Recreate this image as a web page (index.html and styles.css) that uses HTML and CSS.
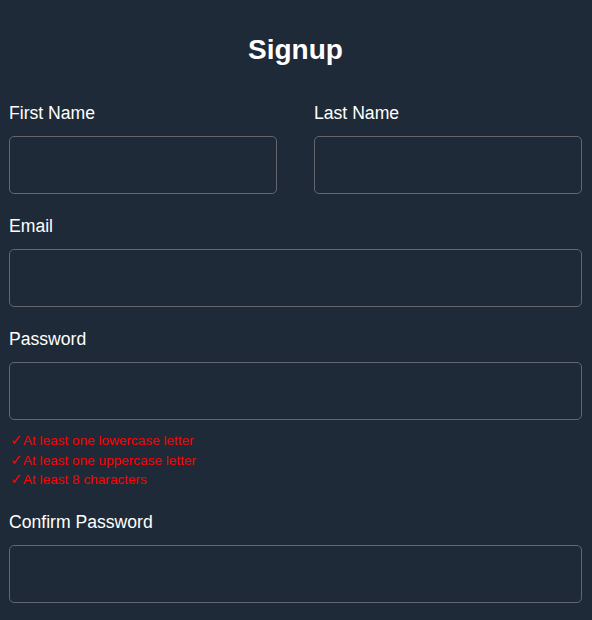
FILE: index.html
```html
<!DOCTYPE html>
<html lang="en">
<head>
  <meta charset="UTF-8">
  <title>Signup</title>
  <link rel="stylesheet" href="styles.css">
</head>
<body>

  <form class="signup">
    <h2>Signup</h2>

    <div class="row">
      <div class="field">
        <label for="firstName">First Name</label>
        <input type="text" id="firstName">
      </div>
      <div class="field">
        <label for="lastName">Last Name</label>
        <input type="text" id="lastName">
      </div>
    </div>

    <div class="field">
      <label for="email">Email</label>
      <input type="email" id="email">
    </div>

    <div class="field">
      <label for="password">Password</label>
      <input type="password" id="password">
      <ul class="rules">
        <li><span class="tick">✓</span>At least one lowercase letter</li>
        <li><span class="tick">✓</span>At least one uppercase letter</li>
        <li><span class="tick">✓</span>At least 8 characters</li>
      </ul>
    </div>

    <div class="field">
      <label for="confirm">Confirm Password</label>
      <input type="password" id="confirm">
    </div>
  </form>

</body>
</html>
```

FILE: styles.css
```css
body {
  margin: 0;
  font-family: 'Liberation Sans', Arial, sans-serif;
  background: #1e2a38;
  color: #fff;
}

.signup {
  padding: 34px 10px 0 9px;
}

.signup h2 {
  margin: 0 0 36px;
  text-align: center;
  font-size: 28px;
  line-height: 32px;
  font-weight: bold;
}

.row {
  display: grid;
  grid-template-columns: 1fr 1fr;
  gap: 37px;
}

.field {
  margin-bottom: 21px;
}

.field label {
  display: block;
  font-size: 17.6px;
  line-height: 22px;
  margin-bottom: 12px;
}

.field input {
  display: block;
  box-sizing: border-box;
  width: 100%;
  height: 58px;
  background: transparent;
  border: 1px solid #63676d;
  border-radius: 5px;
  color: #fff;
  padding: 0 12px;
  font-size: 16px;
  outline: none;
}

.rules {
  list-style: none;
  margin: 11px 0 0;
  padding: 0 0 0 1px;
  color: #ff0000;
  font-size: 13.6px;
  line-height: 19.5px;
}

.tick {
  display: inline-block;
  width: 13px;
  font-family: 'DejaVu Sans', sans-serif;
  font-size: 15px;
  line-height: 1;
}
```
